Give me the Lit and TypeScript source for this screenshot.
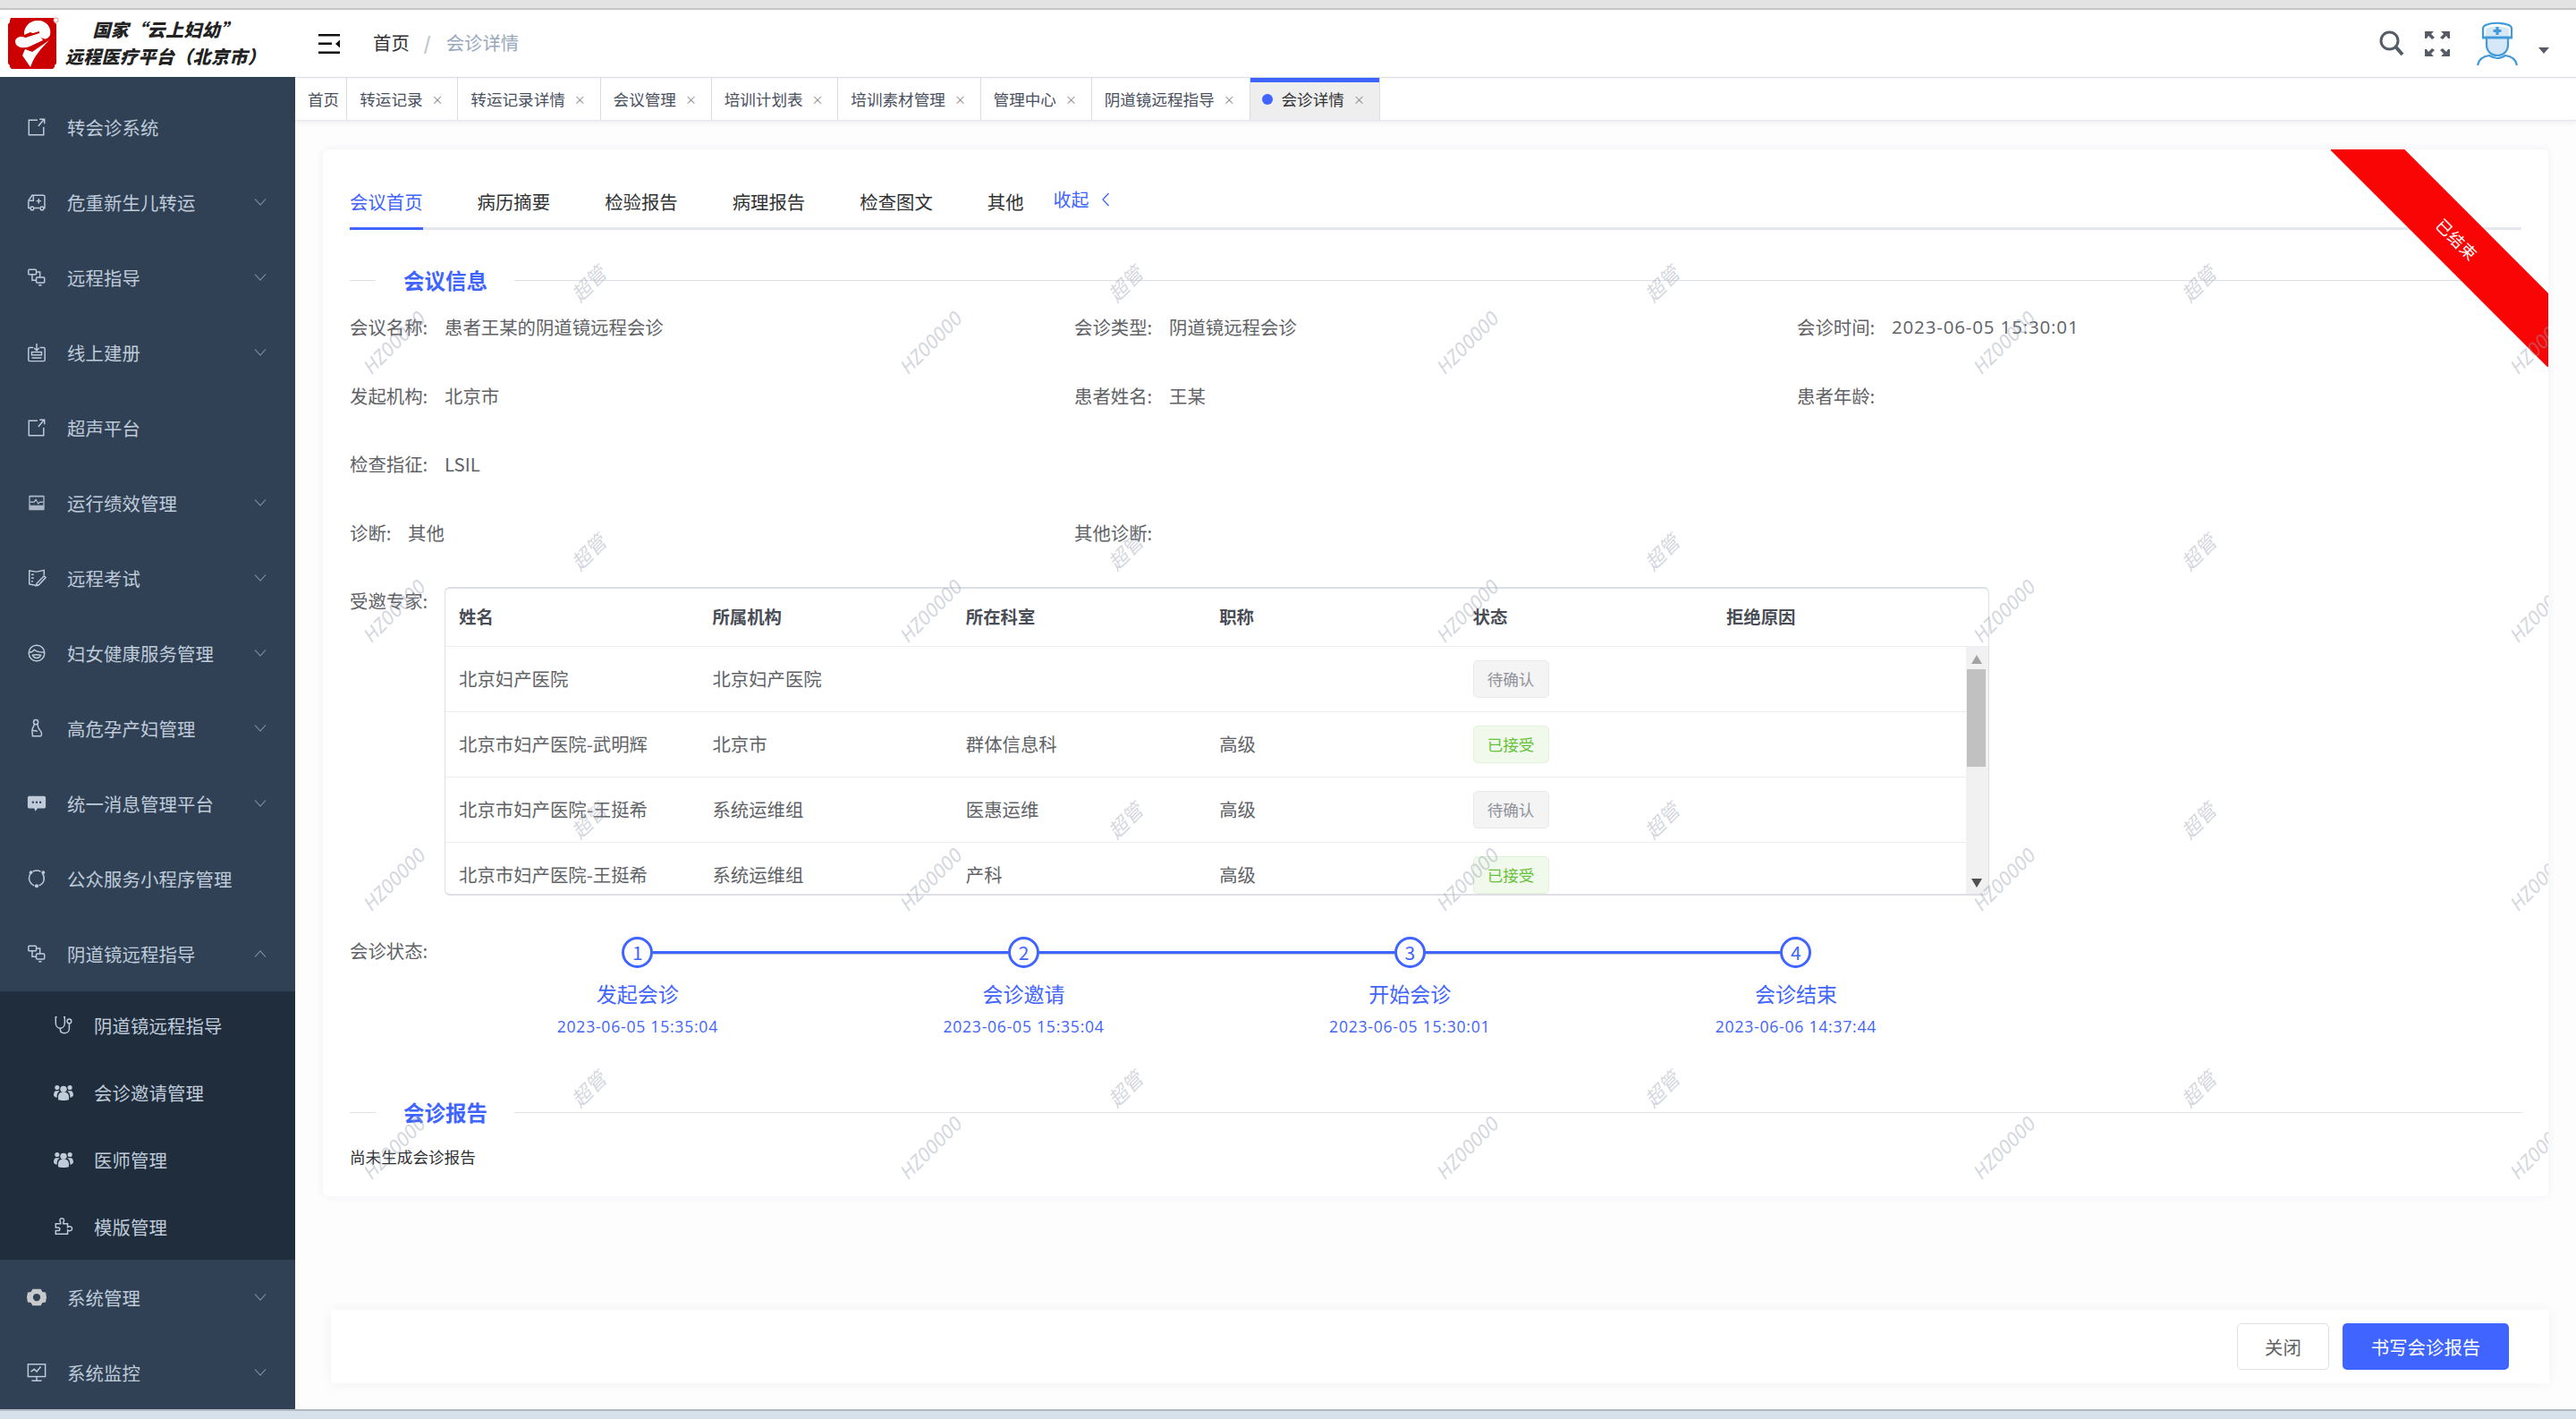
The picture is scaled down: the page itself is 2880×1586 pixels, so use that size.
import { LitElement, html, css, svg } from "lit";
import { customElement } from "lit/decorators.js";

const ic = (body: unknown, extra = "") => html`<svg class="ic ${extra}" viewBox="0 0 24 24" fill="none" stroke="currentColor" stroke-width="1.6">${body}</svg>`;

const icons = {
  link: svg`<path d="M13 3.500H2.500v18h18V12"/><path d="M21 2.500l-7 8.500M15.500 2.500H21.500V8"/>`,
  ambulance: svg`<path d="M2 10L6.500 3.500H20c1 0 1.800.7 1.800 1.800V19h-1M2 10v9h2.200M9 19h7"/><path d="M2.500 10H8V4"/><circle cx="6.500" cy="19.500" r="2"/><circle cx="18.500" cy="19.500" r="2"/><path d="M14.500 7.500v6M11.500 10.500h6"/>`,
  flow: svg`<rect x="2" y="2.500" width="9.500" height="6" rx="1"/><rect x="11.500" y="12" width="10" height="6.500" rx="1"/><path d="M6.500 8.500v7h5M11.500 5.500h4.500V12"/><path d="M14.500 21.500h3.500" stroke-width="1.800"/>`,
  book: svg`<path d="M8 6H3.500C2.500 6 2 6.500 2 7.500V21c0 1 .5 1.500 1.500 1.500h17c1 0 1.500-.5 1.500-1.500V7.500C22 6.500 21.500 6 20.500 6H16"/><path d="M12 1v8.500M9 6.500l3 3 3-3"/><path d="M6 11.500h12v3.500H6zM6 18.500h12"/>`,
  perf: svg`<rect x="2.500" y="3" width="19" height="18" rx="1" fill="currentColor" fill-opacity=".85" stroke="none"/><rect x="4" y="5" width="16" height="10" fill="#304156" stroke="none"/><path d="M4 11h5l2-3 3 5 2-2h4" stroke-width="1.200"/>`,
  exam: svg`<path d="M11.500 4.500L3 3v16.500l8 1.500M11.500 4.500L21 2.500v6M12.500 21l1-.2"/><path d="M5.500 8h3M5.500 12h3M5.500 16h2"/><path d="M21 9.500l2 2-8.500 9-3 1 .8-3.200z"/>`,
  face: svg`<rect x="2.500" y="2.500" width="19" height="19" rx="9"/><path d="M3 11c3 0 5-1.500 6-3 2 2 6 3 12 3M7 14.500c1 2.500 3 3.500 5 3.500s4-1 5-3.500c-3-.6-7-.6-10 0z"/>`,
  preg: svg`<circle cx="11" cy="4.500" r="2.800"/><path d="M9 7.500c-.8 3-2.500 4-2.500 7 0 3 .5 5 .5 7h10c1.500-1 1.500-5-1-7-1-1-2-2-3-7M7 14.500l6 1"/>`,
  chat: svg`<path d="M3 3h18c1 0 2 .8 2 2v11c0 1-1 2-2 2h-8l-2.500 3.500L9 18H3c-1 0-2-1-2-2V5c0-1.200 1-2 2-2z" fill="currentColor" stroke="none"/><circle cx="7.500" cy="10.500" r="1.300" fill="#304156" stroke="none"/><circle cx="12" cy="10.500" r="1.300" fill="#304156" stroke="none"/><circle cx="16.500" cy="10.500" r="1.300" fill="#304156" stroke="none"/>`,
  ring: svg`<path d="M5 5.500c-4 5-2.500 12 4 15M15 20.500c6-2.500 8-9 4-15M7 3.500c3-1.500 7-1.500 10 0"/><circle cx="5" cy="4.500" r="2" fill="currentColor" stroke="none"/><circle cx="20" cy="4.500" r="2" fill="currentColor" stroke="none"/><circle cx="12" cy="21" r="2.300" fill="currentColor" stroke="none"/>`,
  scope: svg`<path d="M4 2H2.500v7c0 4 2.500 6.500 5.500 6.500S13.500 13 13.500 9V2H12"/><path d="M8 15.500V17c0 3 2 4.500 5 4.500s6-2 6-5.500v-6"/><circle cx="19" cy="7" r="2.600"/>`,
  users: svg`<g fill="currentColor" stroke="none"><circle cx="12" cy="8" r="4"/><circle cx="4.200" cy="6" r="2.800"/><circle cx="19.800" cy="6" r="2.800"/><path d="M5.500 21v-4c0-3 2-5 4-5h5c2 0 4 2 4 5v4c-3 1.200-10 1.200-13 0z"/><path d="M0 15c0-3 1.500-5 3-5h3c.6 0 1 .2 1.300.4C5.200 11.500 4 13.500 4 16.500v1.800C2 18 0 17 0 15zM24 15c0-3-1.500-5-3-5h-3c-.6 0-1 .2-1.300.4 2.100 1.100 3.300 3.100 3.300 6.100v1.800c2-.3 4-1.300 4-3.300z"/></g>`,
  puzzle: svg`<path d="M2.500 8.500h6V6.800C7 5 7 2 10 2s3.300 3 1.800 4.800v1.700H17v4.200c2-1.500 5.500-1 5.500 1.800s-3.500 3.200-5.500 1.800V21H2.500v-4h3c1.500 0 2-1 2-2s-.7-2-2-2h-3z"/>`,
  gear: svg`<path fill-rule="evenodd" fill="#c8c9cb" stroke="none" d="M7 2h10l2 3.500 4 .5 1 6-1 6-4 .5L17 22H7l-2-3.500-4-.5-1-6 1-6 4-.5zM12 7.500a4.500 4.500 0 100 9 4.500 4.500 0 000-9z"/>`,
  monitor: svg`<rect x="1.500" y="2" width="21" height="15" /><path d="M5 11l4-3 3 3 5-6M12 17v5M6 22h12"/>`,
};

type MenuItem = { t: string; i: unknown; arrow?: boolean; open?: boolean };

const menuTop: MenuItem[] = [
  { t: "转会诊系统", i: icons.link },
  { t: "危重新生儿转运", i: icons.ambulance, arrow: true },
  { t: "远程指导", i: icons.flow, arrow: true },
  { t: "线上建册", i: icons.book, arrow: true },
  { t: "超声平台", i: icons.link },
  { t: "运行绩效管理", i: icons.perf, arrow: true },
  { t: "远程考试", i: icons.exam, arrow: true },
  { t: "妇女健康服务管理", i: icons.face, arrow: true },
  { t: "高危孕产妇管理", i: icons.preg, arrow: true },
  { t: "统一消息管理平台", i: icons.chat, arrow: true },
  { t: "公众服务小程序管理", i: icons.ring },
  { t: "阴道镜远程指导", i: icons.flow, arrow: true, open: true },
];
const menuSub: MenuItem[] = [
  { t: "阴道镜远程指导", i: icons.scope },
  { t: "会诊邀请管理", i: icons.users },
  { t: "医师管理", i: icons.users },
  { t: "模版管理", i: icons.puzzle },
];
const menuEnd: MenuItem[] = [
  { t: "系统管理", i: icons.gear, arrow: true },
  { t: "系统监控", i: icons.monitor, arrow: true },
];

const tagList = ["转运记录", "转运记录详情", "会议管理", "培训计划表", "培训素材管理", "管理中心", "阴道镜远程指导"];
const tabList = ["会议首页", "病历摘要", "检验报告", "病理报告", "检查图文", "其他"];

const rows = [
  { name: "北京妇产医院", org: "北京妇产医院", dept: "", title: "", ok: false },
  { name: "北京市妇产医院-武明辉", org: "北京市", dept: "群体信息科", title: "高级", ok: true },
  { name: "北京市妇产医院-王挺希", org: "系统运维组", dept: "医惠运维", title: "高级", ok: false },
  { name: "北京市妇产医院-王挺希", org: "系统运维组", dept: "产科", title: "高级", ok: true },
];
const steps = [
  { n: 1, t: "发起会诊", d: "2023-06-05 15:35:04" },
  { n: 2, t: "会诊邀请", d: "2023-06-05 15:35:04" },
  { n: 3, t: "开始会诊", d: "2023-06-05 15:30:01" },
  { n: 4, t: "会诊结束", d: "2023-06-06 14:37:44" },
];

@customElement("app-root")
export class AppRoot extends LitElement {
  static styles = css`
    :host {
      display: flex;
      flex-direction: column;
      height: 1586px;
      width: 2880px;
      overflow: hidden;
      font-family: "Noto Sans CJK SC", "Noto Sans", sans-serif;
      font-size: 20.4px;
      color: #606266;
      background: #fdfdfe;
    }
    * { box-sizing: border-box; }

    .chrome-top { height: 11px; background: #e3e3e3; border-bottom: 2px solid #c8c8c8; flex: none; }
    .chrome-bottom { height: 11px; background: #d5e0ea; border-top: 2px solid #b0b7bf; flex: none; }

    header {
      height: 75px;
      flex: none;
      display: flex;
      align-items: center;
      background: #fff;
      position: relative;
      z-index: 2;
      box-shadow: 0 1px 4px rgba(0, 21, 41, 0.06);
    }
    .brand { width: 330px; display: flex; align-items: center; padding-left: 8px; flex: none; }
    .logo { width: 58px; height: 59px; flex: none; }
    .brand-text {
      width: 232px;
      margin-left: 3px;
      text-align: center;
      font-size: 20px;
      line-height: 30px;
      font-weight: 900;
      font-style: italic;
      letter-spacing: 0.4px;
      color: #222;
      white-space: nowrap;
      margin-top: -1px;
    }
    .fold { width: 24px; height: 22px; margin-left: 26px; flex: none; color: #111; }
    .crumb { margin-left: 37px; display: flex; font-size: 20.400px; line-height: 30px; color: #303133; white-space: nowrap; margin-top: -3px; }
    .crumb i { font-style: normal; color: #c0c4cc; font-weight: 700; margin: 0 17px 0 16px; }
    .crumb span:last-child { color: #97a8be; }
    .tools { margin-left: auto; display: flex; align-items: center; padding-right: 30px; }
    .tools .search { width: 28px; height: 29px; color: #565c66; }
    .tools .full { width: 28px; height: 28px; margin-left: 23px; color: #565c66; }
    .tools .nurse { width: 46px; height: 50px; margin-left: 30px; }
    .caret { width: 0; height: 0; border: 6px solid transparent; border-top: 7px solid #565c66; margin: 22px 0 0 23px; }

    .body { flex: 1; display: flex; min-height: 0; }

    .side { width: 330px; flex: none; background: #304156; color: #bfcbd9; padding-top: 14px; overflow: hidden; }
    .item { height: 84px; display: flex; align-items: center; padding-left: 30px; white-space: nowrap; letter-spacing: 0.1px; }
    .item .ic { width: 22px; height: 22px; flex: none; margin-right: 23px; }
    .item .arrow { width: 14px; height: 8px; margin-left: auto; margin-right: 32px; color: #8a97a8; flex: none; }
    .sub { background: #1f2d3d; }
    .sub .item { height: 75px; padding-left: 60px; }
    .sub .ic { margin-right: 23px; }

    .right { flex: 1; min-width: 0; display: flex; flex-direction: column; }
    .tags {
      height: 49px;
      flex: none;
      display: flex;
      background: #fff;
      border-top: 1px solid #e3e6ec;
      border-bottom: 1px solid #e3e6ec;
      box-shadow: 0 2px 6px rgba(0, 21, 41, 0.07);
      font-size: 17.600px;
      color: #495060;
    }
    .tag { display: flex; align-items: center; gap: 10px; padding: 0 20.700px 0 14px; border-right: 1px solid #d8dce5; white-space: nowrap; }
    .tag.home { padding-right: 8px; }
    .tag.on { background: #eee; box-shadow: inset 0 5px 0 #3f64ff; padding-left: 13px; color: #333; }
    .tag.on em { width: 12px; height: 12px; border-radius: 50%; background: #3f64ff; }
    .tag b { font-weight: 400; font-size: 13px; color: #888; width: 8px; text-align: center; line-height: 1; }

    .main { flex: 1; min-height: 0; padding: 32px 31px 0; }
    .card {
      position: relative;
      overflow: hidden;
      background: #fff;
      border-radius: 6px;
      box-shadow: 0 0 10px rgba(60, 70, 110, 0.07);
      padding: 34px 30px 31px;
      height: 1170px;
    }
    .tabs { display: flex; gap: 61px; border-bottom: 3px solid #e4e7ed; height: 56px; color: #303133; position: relative; }
    .tab { height: 56px; line-height: 49px; border-bottom: 3px solid transparent; white-space: nowrap; }
    .tab.on { color: #3f64ff; border-bottom-color: #3f64ff; }
    .fold-link { color: #3f64ff; line-height: 44px; margin-left: -28px; font-size: 20px; display: flex; align-items: flex-start; white-space: nowrap; }
    .fold-link svg { width: 10px; height: 16px; margin: 14px 0 0 13px; }

    .sec { display: flex; align-items: center; height: 28px; margin-top: 42px; color: #3f64ff; font-size: 23.500px; font-weight: 700; line-height: 26px; }
    .sec::before { content: ""; width: 29px; height: 1px; background: #dcdfe6; margin-right: 31px; }
    .sec::after { content: ""; flex: 1; height: 1px; background: #dcdfe6; margin-left: 30px; }
    .sec.second { margin-top: 70px; }

    .info { display: grid; grid-template-columns: 810px 808px 1fr; grid-auto-rows: 76.500px; align-items: center; }
    .field { display: flex; white-space: nowrap; }
    .field label { width: 106px; flex: none; }
    .field .short { width: 65px; }
    .date { font-family: "Open Sans", "Noto Sans", sans-serif; letter-spacing: 0.9px; position: relative; top: 1px; }

    .experts { display: flex; margin-top: 23px; }
    .experts label { width: 106px; flex: none; line-height: 30px; }
    .table { width: 1727px; height: 345px; border: 1px solid #dcdfe6; border-top-width: 2px; border-bottom-width: 2px; border-radius: 6px; overflow: hidden; }
    .tr { display: grid; grid-template-columns: repeat(5, 283.400px) 1fr; align-items: center; border-bottom: 1px solid #ebeef5; height: 73px; white-space: nowrap; }
    .tr > div { padding-left: 15px; line-height: 30px; margin-top: -2px; }
    .tr.head { height: 65px; font-weight: 700; color: #494d55; font-size: 19.400px; }
    .tbody { display: flex; height: 278px; }
    .rows { flex: 1; min-width: 0; overflow: hidden; }
    .st { display: inline-flex; align-items: center; justify-content: center; width: 85px; height: 42px; border-radius: 5px; font-size: 17.600px; border: 1px solid #e9e9eb; background: #f4f4f5; color: #909399; vertical-align: middle; margin-top: 2px; }
    .st.ok { border-color: #e1f3d8; background: #f0f9eb; color: #67c23a; }
    .bar { width: 25px; flex: none; background: #f1f1f1; display: flex; flex-direction: column; align-items: center; padding: 9px 2px 9px 0; }
    .bar .up { border: 6px solid transparent; border-top: 0; border-bottom: 10px solid #a3a3a3; }
    .bar .thumb { width: 21px; height: 109px; background: #c1c1c1; margin-top: 6px; }
    .bar .down { margin-top: auto; border: 6px solid transparent; border-bottom: 0; border-top: 10px solid #505050; }

    .state { display: flex; margin-top: 46px; }
    .state > label { width: 106px; flex: none; line-height: 30px; }
    .step { width: 431.700px; display: flex; flex-direction: column; align-items: center; color: #3f64ff; }
    .step-head { width: 100%; height: 35px; display: flex; align-items: center; }
    .step-head i { flex: 1; height: 3px; background: #3f64ff; box-shadow: 0 1px 0 #c9cbd6; }
    .step:first-of-type .step-head i:first-child,
    .step:last-of-type .step-head i:last-child { background: none; box-shadow: none; }
    .num { width: 35px; height: 35px; border: 3px solid #3f64ff; border-radius: 50%; display: flex; align-items: center; justify-content: center; font-size: 21px; line-height: 1; flex: none; }
    .step-t { font-size: 23px; line-height: 30px; margin-top: 13px; }
    .step-d { font-size: 17.600px; line-height: 24px; margin-top: 10px; white-space: nowrap; font-family: "Open Sans", "Noto Sans", sans-serif; letter-spacing: 0.75px; }
    .none { font-size: 17.600px; line-height: 24px; margin-top: 24px; color: #303133; }

    .ribbon {
      position: absolute;
      top: 0;
      right: 0;
      width: 243px;
      height: 243px;
      overflow: hidden;
      pointer-events: none;
    }
    .ribbon span {
      position: absolute;
      top: 71px;
      left: -59px;
      width: 400px;
      height: 59.400px;
      line-height: 59.400px;
      text-align: center;
      background: #fa0505;
      color: #fff;
      font-size: 18px;
      letter-spacing: 1px;
      transform: rotate(45deg);
    }
    .marks { position: absolute; inset: 0; display: grid; grid-template-columns: repeat(5, 600px); grid-auto-rows: 300px; pointer-events: none; overflow: hidden; }
    .tile { position: relative; }
    .tile span { position: absolute; font-style: italic; color: rgba(150, 158, 175, 0.42); white-space: nowrap; transform: translate(-50%, -50%) rotate(-45deg); }
    .tile .a { left: 296px; top: 149px; font-size: 22px; }
    .tile .b { left: 79px; top: 215px; font-size: 22px; font-family: "Noto Sans", sans-serif; }

    .footer {
      margin: 127px 0 0 9px;
      height: 82px;
      width: 2480px;
      background: #fff;
      box-shadow: 0 0 14px rgba(0, 0, 0, 0.05);
      display: flex;
      align-items: center;
      justify-content: flex-end;
      gap: 15px;
      padding-right: 45px;
    }
    .btn { height: 52px; border-radius: 5px; display: flex; align-items: center; justify-content: center; font-size: 20.400px; }
    .btn.plain { width: 103px; border: 1px solid #dcdfe6; color: #606266; background: #fff; }
    .btn.main-btn { width: 186px; background: #3f64ff; color: #fff; }
  `;

  private menuItem(m: MenuItem) {
    return html`<div class="item">
      ${ic(m.i)}<span>${m.t}</span>
      ${m.arrow
        ? html`<svg class="arrow" viewBox="0 0 14 8" fill="none" stroke="currentColor" stroke-width="1.100">
            <path d=${m.open ? "M1 7.500L7 1l6 6.500" : "M1 .5L7 7l6-6.500"}></path>
          </svg>`
        : ""}
    </div>`;
  }

  private renderHeader() {
    return html`<header>
      <div class="brand">
        <svg class="logo" viewBox="0 0 58 59">
          <path d="M4 1h48l1 3v2l2 2v44l-2 2v2l-2 2H5l-2-2v-2l-2-2V8l2-2V4z" fill="#cc0000"></path>
          <path d="M19 20C18 10 27 3 35 4c9 0 15 8 13 16-2 5-7 6-11 2l-11-5z" fill="#fff"></path>
          <path d="M9 27c1-5 7-6 11-4l15-5 5 8-15 7c-7 3-16 1-16-6z" fill="#fff"></path>
          <path d="M20 22l16-5" stroke="#cc0000" stroke-width="2" fill="none"></path>
          <path d="M20 36l8 3 19-13c-9 9-17 18-21 30l-9-13z" fill="#fff"></path>
          <circle cx="54.500" cy="3.500" r="2.600" fill="#fff" stroke="#e88" stroke-width="1"></circle>
        </svg>
        <div class="brand-text">国家“云上妇幼”<br />远程医疗平台（北京市）</div>
      </div>
      <svg class="fold" viewBox="0 0 24 22" fill="currentColor">
        <rect width="24" height="2.500"></rect>
        <rect y="9.500" width="15" height="2.500"></rect>
        <rect y="19.500" width="24" height="2.500"></rect>
        <path d="M24 6.500v9l-5-4.500z"></path>
      </svg>
      <div class="crumb"><span>首页</span><i>/</i><span>会诊详情</span></div>
      <div class="tools">
        <svg class="search" viewBox="0 0 28 29" fill="none" stroke="currentColor">
          <circle cx="11.500" cy="11.500" r="9.500" stroke-width="3"></circle>
          <path d="M18.500 18.500L26 27" stroke-width="4"></path>
        </svg>
        <svg class="full" viewBox="0 0 28 28" fill="currentColor">
          <path d="M0 0h10L7 3l4 4-3 2-4-4-2 3H0zM28 0H18l3 3-4 4 3 2 4-4 2 3h2zM0 28h10l-3-3 4-4-3-2-4 4-2-3H0zM28 28H18l3-3-4-4 3-2 4 4 2-3h2z"></path>
        </svg>
        <svg class="nurse" viewBox="0 0 46 50" fill="none" stroke="#429ada" stroke-width="2.200">
          <path d="M11 18h24v8c0 7-5 12-12 12s-12-5-12-12z" fill="#d6e8f7" stroke="none"></path>
          <path d="M7 18V8c0-2 1-3 3-4 7-3 19-3 26 0 2 1 3 2 3 4v10z" fill="#fff"></path>
          <path d="M10 8c8-3 18-3 26 0v9H10z" fill="#d6e8f7" stroke="none"></path>
          <path d="M6 18h34" stroke-width="3"></path>
          <path d="M23 6v9M18.500 10.500h9" stroke-width="3.200"></path>
          <path d="M11 19v7c0 7 5 12 12 12s12-5 12-12v-7"></path>
          <path d="M1 49c1-6 6-10 13-11 3 2 6 3 9 3s6-1 9-3c7 1 12 5 13 11"></path>
        </svg>
        <div class="caret"></div>
      </div>
    </header>`;
  }

  private renderCard() {
    return html`<div class="card">
      <div class="tabs">
        ${tabList.map((t, i) => html`<div class="tab ${i === 0 ? "on" : ""}">${t}</div>`)}
        <div class="fold-link">
          收起
          <svg viewBox="0 0 10 16" fill="none" stroke="currentColor" stroke-width="1.300"><path d="M8.500 1L2 8l6.500 7"></path></svg>
        </div>
      </div>

      <div class="sec">会议信息</div>
      <div class="info">
        <div class="field"><label>会议名称:</label><span>患者王某的阴道镜远程会诊</span></div>
        <div class="field"><label>会诊类型:</label><span>阴道镜远程会诊</span></div>
        <div class="field"><label>会诊时间:</label><span class="date">2023-06-05 15:30:01</span></div>
        <div class="field"><label>发起机构:</label><span>北京市</span></div>
        <div class="field"><label>患者姓名:</label><span>王某</span></div>
        <div class="field"><label>患者年龄:</label><span></span></div>
        <div class="field"><label>检查指征:</label><span>LSIL</span></div>
        <div></div>
        <div></div>
        <div class="field"><label class="short">诊断:</label><span>其他</span></div>
        <div class="field"><label>其他诊断:</label><span></span></div>
      </div>

      <div class="experts">
        <label>受邀专家:</label>
        <div class="table">
          <div class="tr head">
            <div>姓名</div><div>所属机构</div><div>所在科室</div><div>职称</div><div>状态</div><div>拒绝原因</div>
          </div>
          <div class="tbody">
            <div class="rows">
              ${rows.map(
                (r) => html`<div class="tr">
                  <div>${r.name}</div><div>${r.org}</div><div>${r.dept}</div><div>${r.title}</div>
                  <div><span class="st ${r.ok ? "ok" : ""}">${r.ok ? "已接受" : "待确认"}</span></div>
                  <div></div>
                </div>`
              )}
            </div>
            <div class="bar"><div class="up"></div><div class="thumb"></div><div class="down"></div></div>
          </div>
        </div>
      </div>

      <div class="state">
        <label>会诊状态:</label>
        ${steps.map(
          (s) => html`<div class="step">
            <div class="step-head"><i></i><div class="num">${s.n}</div><i></i></div>
            <div class="step-t">${s.t}</div>
            <div class="step-d">${s.d}</div>
          </div>`
        )}
      </div>

      <div class="sec second">会诊报告</div>
      <div class="none">尚未生成会诊报告</div>

      <div class="ribbon"><span>已结束</span></div>
      <div class="marks">
        ${Array.from({ length: 20 }, () => html`<div class="tile"><span class="a">超管</span><span class="b">HZ00000</span></div>`)}
      </div>
    </div>`;
  }

  render() {
    return html`
      <div class="chrome-top"></div>
      ${this.renderHeader()}
      <div class="body">
        <aside class="side">
          ${menuTop.map((m) => this.menuItem(m))}
          <div class="sub">${menuSub.map((m) => this.menuItem(m))}</div>
          ${menuEnd.map((m) => this.menuItem(m))}
        </aside>
        <div class="right">
          <div class="tags">
            <div class="tag home">首页</div>
            ${tagList.map((t) => html`<div class="tag">${t}<b>×</b></div>`)}
            <div class="tag on"><em></em>会诊详情<b>×</b></div>
          </div>
          <div class="main">
            ${this.renderCard()}
            <div class="footer">
              <div class="btn plain">关闭</div>
              <div class="btn main-btn">书写会诊报告</div>
            </div>
          </div>
        </div>
      </div>
      <div class="chrome-bottom"></div>
    `;
  }
}
